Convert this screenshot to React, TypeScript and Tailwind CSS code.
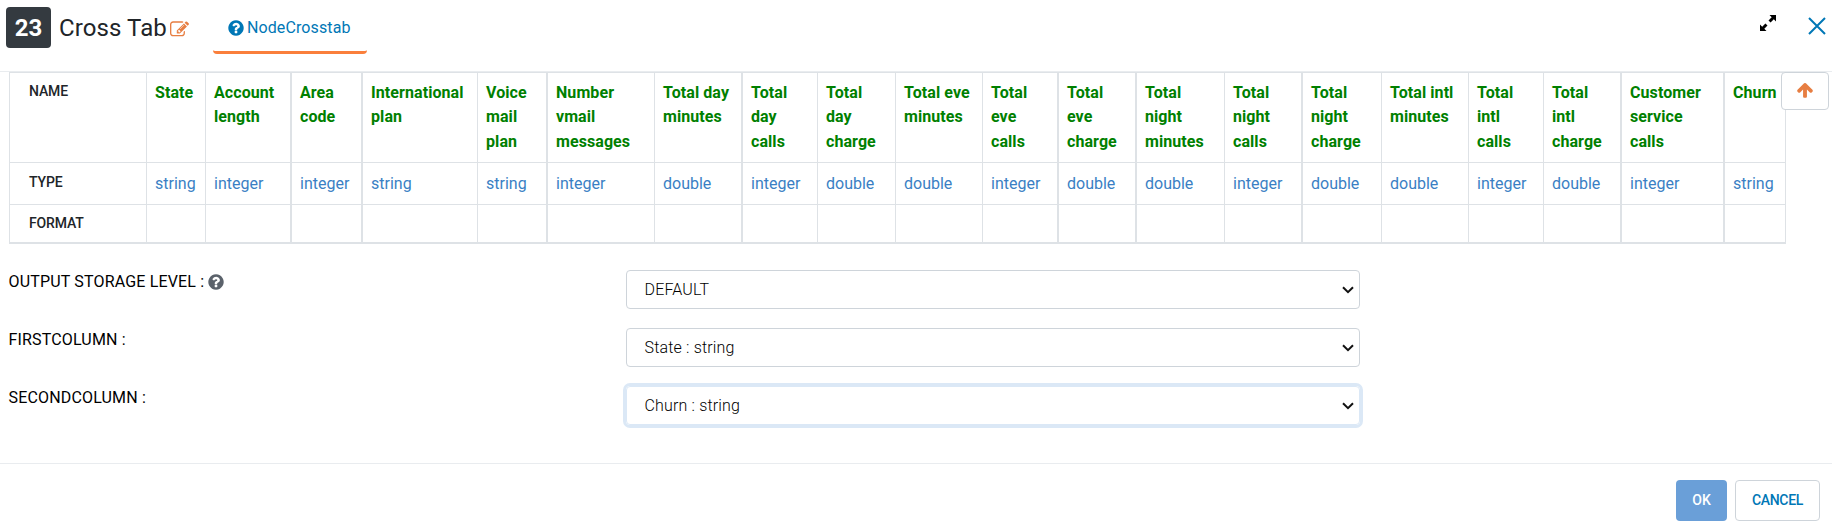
import React from "react";

type Column = { name: string; type: string; cls: string };

const columns: Column[] = [
  { name: "State", type: "string", cls: "w-[59px] border-l" },
  { name: "Account length", type: "integer", cls: "w-[85px] border-l" },
  { name: "Area code", type: "integer", cls: "w-[71px] border-l-2" },
  { name: "International plan", type: "string", cls: "w-[116px] border-l-2" },
  { name: "Voice mail plan", type: "string", cls: "w-[69px] border-l" },
  { name: "Number vmail messages", type: "integer", cls: "w-[108px] border-l-2" },
  { name: "Total day minutes", type: "double", cls: "w-[87px] border-l" },
  { name: "Total day calls", type: "integer", cls: "w-[76px] border-l-2" },
  { name: "Total day charge", type: "double", cls: "w-[78px] border-l" },
  { name: "Total eve minutes", type: "double", cls: "w-[87px] border-l" },
  { name: "Total eve calls", type: "integer", cls: "w-[75px] border-l" },
  { name: "Total eve charge", type: "double", cls: "w-[78px] border-l-2" },
  { name: "Total night minutes", type: "double", cls: "w-[89px] border-l-2" },
  { name: "Total night calls", type: "integer", cls: "w-[77px] border-l" },
  { name: "Total night charge", type: "double", cls: "w-[80px] border-l-2" },
  { name: "Total intl minutes", type: "double", cls: "w-[87px] border-l" },
  { name: "Total intl calls", type: "integer", cls: "w-[75px] border-l" },
  { name: "Total intl charge", type: "double", cls: "w-[77px] border-l" },
  { name: "Customer service calls", type: "integer", cls: "w-[103px] border-l-2" },
  { name: "Churn", type: "string", cls: "w-[63px] border-l-2 border-r" },
];

const cell = "border-[#dee2e6] pl-2 pr-[7px] align-top";
const rowHead = "w-[137px] border-l border-[#dee2e6] pl-[19px] text-left align-top text-[14px] leading-[21px] font-medium tracking-[-0.15px] text-[#212529]";

function QuestionCircle({ className }: { className: string }) {
  return (
    <svg viewBox="0 0 1792 1792" className={className} fill="currentColor">
      <path d="M1024 1376v-192q0-14-9-23t-23-9h-192q-14 0-23 9t-9 23v192q0 14 9 23t23 9h192q14 0 23-9t9-23zm256-672q0-88-55.5-163t-138.5-116-170-41q-243 0-371 213-15 24 8 42l132 100q7 6 19 6 16 0 25-12 53-68 86-92 34-24 86-24 48 0 85.5 26t37.5 59q0 38-20 61t-68 45q-63 28-115.5 86.5t-52.5 125.5v36q0 14 9 23t23 9h192q14 0 23-9t9-23q0-19 21.5-49.5t54.5-49.5q32-18 49-28.5t46-35 44.5-48 28-60.5 12.5-81zm384 192q0 209-103 385.5t-279.5 279.5-385.5 103-385.5-103-279.5-279.5-103-385.5 103-385.5 279.5-279.5 385.5-103 385.5 103 279.5 279.5 103 385.5z" />
    </svg>
  );
}

function EditIcon({ className }: { className: string }) {
  return (
    <svg viewBox="0 0 1792 1792" className={className} fill="currentColor">
      <path d="M888 1184l116-116-152-152-116 116v56h96v96h56zm440-720q-16-16-33 1l-350 350q-17 17-1 33t33-1l350-350q17-17 1-33zm80 594v190q0 119-84.5 203.5t-203.5 84.5h-832q-119 0-203.5-84.5t-84.5-203.5v-832q0-119 84.5-203.5t203.5-84.5h832q63 0 117 25 15 7 18 23 3 17-9 29l-49 49q-14 14-32 8-23-6-45-6h-832q-66 0-113 47t-47 113v832q0 66 47 113t113 47h832q66 0 113-47t47-113v-126q0-13 9-22l64-64q15-15 35-7t20 29zm-96-738l288 288-672 672h-288v-288zm444 132l-92 92-288-288 92-92q28-28 68-28t68 28l152 152q28 28 28 68t-28 68z" />
    </svg>
  );
}

function ArrowUp() {
  return (
    <svg viewBox="0 0 1792 1792" className="mb-[3px] h-[18px] w-[18px]" fill="currentColor">
      <path d="M1675 971q0 51-37 90l-75 75q-38 38-91 38-54 0-90-38l-294-293v704q0 52-37.5 84.5t-90.5 32.5h-128q-53 0-90.5-32.5t-37.5-84.5v-704l-294 293q-36 38-90 38t-90-38l-75-75q-38-38-38-90 0-53 38-91l651-651q35-37 90-37 54 0 91 37l651 651q37 39 37 91z" />
    </svg>
  );
}

function Field({ label, value, help, focused }: { label: string; value: string; help?: boolean; focused?: boolean }) {
  return (
    <div className="flex h-[58px] items-start">
      <div className="flex w-[617.5px] items-center text-[16px] leading-[24px]">
        <span className="tracking-[0.17px] text-black">{label}</span>
        {help && <QuestionCircle className="ml-[3px] h-[18px] w-[18px] text-[#5b626b]" />}
      </div>
      <div
        className={
          focused
            ? "flex h-[39px] w-[734px] items-center justify-between rounded-[4px] border border-[#dbe8f6] pr-[5px] pl-[17.5px] ring-[3px] ring-[#dbe8f6]"
            : "flex h-[39px] w-[734px] items-center justify-between rounded-[4px] border border-[#ced4da] pr-[5px] pl-[17.5px]"
        }
      >
        <span className="text-[16px] leading-6 font-light tracking-[0.17px] text-black">{value}</span>
        <svg viewBox="0 0 12 8" className="h-[8px] w-[12px]" fill="none" stroke="#111" strokeWidth="2">
          <path d="M1 1.200l5 5 5-5" />
        </svg>
      </div>
    </div>
  );
}

export default function App() {
  return (
    <div className="flex h-[527px] w-[1832px] flex-col overflow-hidden bg-white font-[Roboto,sans-serif] text-[#212529]">
      <header className="flex h-[72px] shrink-0 items-start border-b border-[#e9ecef] pl-[6px]">
        <div className="mt-[7px] flex h-[41px] w-[45px] items-center justify-center rounded-[4px] bg-[#343a40] text-[24px] font-bold text-white">
          23
        </div>
        <h1 className="mt-[10px] ml-[8px] text-[24px] leading-[36px] tracking-[0.1px] whitespace-nowrap">Cross Tab</h1>
        <EditIcon className="mt-[20px] ml-[3px] h-[19px] w-[19px] text-[#e77e42]" />
        <div className="ml-[24px] flex h-[54px] w-[154px] items-center rounded-[4px] border-b-[3px] border-[#fa7f3c] pt-[5px] pl-[14px] text-[#0077b6]">
          <QuestionCircle className="h-[18px] w-[18px]" />
          <span className="ml-[2px] text-[16px] tracking-[0.12px]">NodeCrosstab</span>
        </div>
        <div className="flex-1" />
        <svg viewBox="0 0 16 16" className="mt-[15px] h-[16px] w-[16px]" fill="#000">
          <path d="M9.500 0H16v6.500L13.800 4.300l-3.200 3.200L8.500 5.400l3.200-3.200zM6.500 16H0V9.500l2.200 2.200 3.200-3.200 2.100 2.100-3.200 3.200z" />
        </svg>
        <svg viewBox="0 0 18 18" className="mt-[17px] mr-[6px] ml-[32px] h-[18px] w-[18px]" stroke="#0077b6" strokeWidth="2">
          <path d="M1 1l16 16M17 1L1 17" />
        </svg>
      </header>

      <main className="relative shrink-0">
        <table className="ml-[9px] w-[1777px] table-fixed border-separate border-spacing-0">
          <tbody>
            <tr className="h-[91px]">
              <th className={`${rowHead} border-t border-b pt-[8px]`}>NAME</th>
              {columns.map((c) => (
                <th key={c.name} className={`${cell} ${c.cls} border-t border-b pt-[8px] text-left text-[16px] leading-[24.4px] font-bold tracking-[0.08px] text-[#008000]`}>
                  {c.name}
                </th>
              ))}
            </tr>
            <tr className="h-[42px]">
              <th className={`${rowHead} border-b pt-[9px]`}>TYPE</th>
              {columns.map((c) => (
                <td key={c.name} className={`${cell} ${c.cls} border-b pt-[9px] text-[16px] leading-6 text-[#3a7fc4]`}>
                  {c.type}
                </td>
              ))}
            </tr>
            <tr className="h-[39px]">
              <th className={`${rowHead} border-b-2 pt-[8px]`}>FORMAT</th>
              {columns.map((c) => (
                <td key={c.name} className={`${cell} ${c.cls} border-b-2`} />
              ))}
            </tr>
          </tbody>
        </table>
        <button className="absolute top-0 right-[3px] flex h-[38px] w-[48px] items-center justify-center rounded-[4px] border border-[#ced4da] bg-white text-[#e77e42]">
          <ArrowUp />
        </button>
      </main>

      <section className="h-[220px] shrink-0 border-b border-[#e9ecef] pt-[26px] pl-[8.5px]">
        <Field label="OUTPUT STORAGE LEVEL :" value="DEFAULT" help />
        <Field label="FIRSTCOLUMN :" value="State : string" />
        <Field label="SECONDCOLUMN :" value="Churn : string" focused />
      </section>

      <footer className="flex justify-end gap-2 pt-[16px] pr-[12px]">
        <button className="h-[41px] w-[51px] rounded-[4px] bg-[#6a9fd8] text-[14px] font-medium text-white">OK</button>
        <button className="h-[41px] w-[85px] rounded-[4px] border border-[#ced4da] text-[14px] font-medium tracking-[-0.3px] text-[#0077b6]">CANCEL</button>
      </footer>
    </div>
  );
}
